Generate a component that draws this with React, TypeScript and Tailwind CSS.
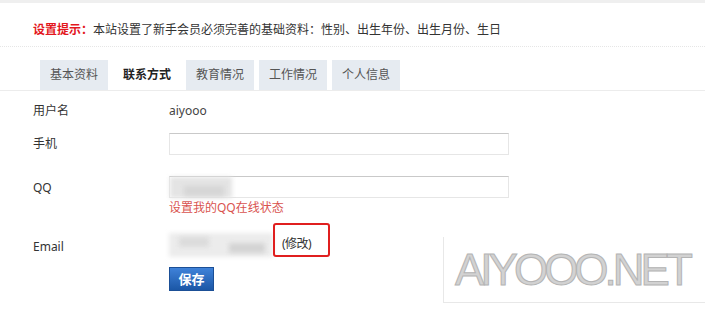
import React from "react";

const tabs = ["基本资料", "联系方式", "教育情况", "工作情况", "个人信息"];

function Blur({ className }: { className: string }) {
  return <div className={`absolute blur-[2px] ${className}`} />;
}

export default function App() {
  return (
    <div className="relative w-[705px] h-[309px] overflow-hidden bg-white text-[12px] text-[#333] font-['Noto_Sans','Noto_Sans_CJK_SC',sans-serif]">
      {/* 顶部灰条 */}
      <div className="h-[3px] bg-[#efefef]" />

      {/* 设置提示 */}
      <div className="h-[44px] pt-[10px] pl-[33px] flex items-center border-b border-dotted border-[#e6e6e6]">
        <span className="font-bold text-[#e3161d]">设置提示：</span>
        <span>本站设置了新手会员必须完善的基础资料：性别、出生年份、出生月份、生日</span>
      </div>

      {/* 标签页 */}
      <div className="mt-[13px] pl-[40px] flex gap-[5px] border-b border-[#ececec]">
        {tabs.map((t, i) => (
          <div
            key={t}
            className={
              i === 1
                ? "w-[68px] h-[30px] flex items-center justify-center bg-white font-bold text-[#222]"
                : "w-[68px] h-[30px] flex items-center justify-center bg-[#e6ebf1] text-[#555]"
            }
          >
            {t}
          </div>
        ))}
      </div>

      {/* 表单 */}
      <div className="pl-[33px]">
        <div className="mt-[10px] h-[20px] flex items-center">
          <div className="w-[136px]">用户名</div>
          <div className="text-[#444]">aiyooo</div>
        </div>

        <div className="mt-[12px] h-[22px] flex items-center">
          <div className="w-[136px]">手机</div>
          <div className="w-[340px] h-[22px] border border-[#e6e6e6] border-t-[#c9c9c9]" />
        </div>

        <div className="mt-[21px] h-[22px] flex items-center">
          <div className="w-[136px] pt-[1px]">QQ</div>
          <div className="relative w-[340px] h-[22px] border border-[#e6e6e6] border-t-[#c9c9c9] bg-white">
            <Blur className="left-0 top-0 w-[62px] h-[21px] bg-[#e4e4e4]" />
            <Blur className="left-[14px] top-[9px] w-[40px] h-[10px] bg-[#d6d6d6]" />
          </div>
        </div>
        <div className="h-[20px] flex items-center">
          <div className="w-[136px]" />
          <div className="text-[#d9534f]">设置我的QQ在线状态</div>
        </div>

        <div className="mt-[15px] h-[24px] flex items-center">
          <div className="w-[136px] pt-[3px]">Email</div>
          <div className="relative w-[104px] h-[24px]">
            <Blur className="left-0 top-0 w-[104px] h-[24px] bg-[#ececec]" />
            <Blur className="left-[10px] top-[4px] w-[30px] h-[10px] bg-[#dcdcdc]" />
            <Blur className="left-[60px] top-[10px] w-[36px] h-[10px] bg-[#d4d4d4]" />
          </div>
          <div className="relative -mt-[10px] w-[57px] h-[34px] border-2 border-[#e01f1f] rounded-[3px] flex items-center pl-[7px] pt-[8px]">
            <span className="tracking-[-0.5px]">(修改)</span>
          </div>
        </div>

        <div className="mt-[10px] pl-[136px]">
          <button className="w-[45px] h-[24px] border border-[#1b4f96] bg-gradient-to-b from-[#3f82d9] to-[#1b57a6] text-white font-bold text-[13px] leading-none">
            保存
          </button>
        </div>
      </div>

      {/* 水印 */}
      <div className="absolute left-[443px] top-[237px] w-[262px] h-[66px] bg-white border-l border-b border-[#e8e8e8] pl-[11px] flex items-center">
        <span className="font-['Liberation_Sans',sans-serif] text-[44px] leading-none tracking-[-4px] text-[#d2d2d2] [-webkit-text-stroke:1px_#b4b4b4]">
          AIYOOO.NET
        </span>
      </div>
    </div>
  );
}
